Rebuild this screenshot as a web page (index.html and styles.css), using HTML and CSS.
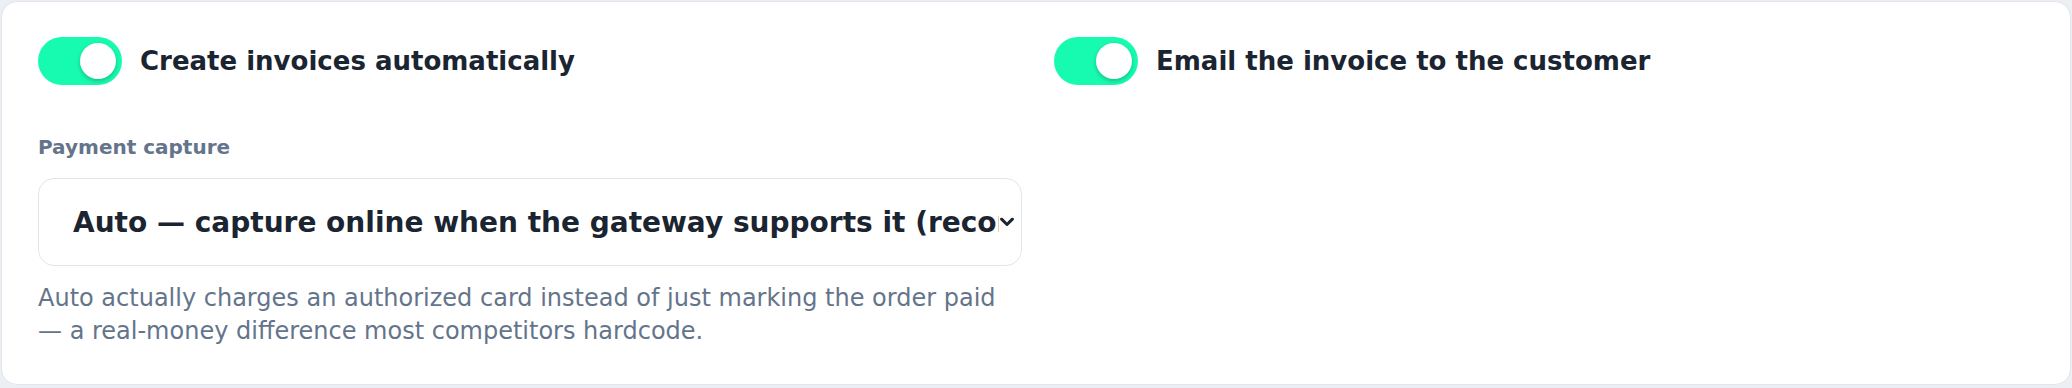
FILE: index.html
```html
<!DOCTYPE html>
<html lang="en">
<head>
<meta charset="utf-8">
<title>Invoice settings</title>
<link rel="stylesheet" href="styles.css">
</head>
<body>
<section class="card">
  <div class="grid">
    <div class="col">
      <label class="toggle-row">
        <span class="switch on"><span class="knob"></span></span>
        <span class="toggle-label">Create invoices automatically</span>
      </label>
      <div class="field">
        <div class="field-label">Payment capture</div>
        <div class="select-wrap">
          <select class="select">
            <option>Auto — capture online when the gateway supports it (recommended)</option>
            <option>Manual — mark the order paid only</option>
          </select>
          <svg class="chevron" viewBox="0 0 14 9" width="14" height="9" aria-hidden="true">
            <path d="M1.6 1.6 L7 7 L12.4 1.6" fill="none" stroke="#1b2431" stroke-width="3" stroke-linecap="round" stroke-linejoin="round"/>
          </svg>
        </div>
        <p class="help">Auto actually charges an authorized card instead of just marking the order paid — a real-money difference most competitors hardcode.</p>
      </div>
    </div>
    <div class="col">
      <label class="toggle-row">
        <span class="switch on"><span class="knob"></span></span>
        <span class="toggle-label">Email the invoice to the customer</span>
      </label>
    </div>
  </div>
</section>
</body>
</html>
```

FILE: styles.css
```css
html, body {
  margin: 0;
  padding: 0;
}
body {
  background: #eceff3;
  font-family: "DejaVu Sans", Verdana, sans-serif;
  color: #1b2431;
}
.card {
  margin: 1px;
  height: 384px;
  box-sizing: border-box;
  background: #ffffff;
  border: 1px solid #e1e5eb;
  border-radius: 16px;
  padding: 35px 32px 0 36px;
}
.grid {
  display: grid;
  grid-template-columns: 1fr 1fr;
  column-gap: 32px;
}
.col {
  display: flex;
  flex-direction: column;
  min-width: 0;
}
.toggle-row {
  display: flex;
  align-items: center;
  gap: 18px;
  height: 48px;
}
.switch {
  flex: none;
  width: 84px;
  height: 48px;
  border-radius: 24px;
  background: #17fbb1;
  box-sizing: border-box;
  padding: 6px;
  display: flex;
  justify-content: flex-end;
  align-items: center;
}
.knob {
  width: 36px;
  height: 36px;
  border-radius: 50%;
  background: #ffffff;
  box-shadow: 0 2px 4px rgba(15, 40, 30, 0.28);
}
.toggle-label {
  font-size: 26px;
  font-weight: 700;
  color: #1b2431;
  line-height: 32px;
}
.field {
  margin-top: 48px;
  display: flex;
  flex-direction: column;
}
.field-label {
  font-size: 20px;
  font-weight: 700;
  line-height: 28px;
  color: #64748b;
  margin-bottom: 17px;
}
.select-wrap {
  position: relative;
}
.select {
  display: block;
  -webkit-appearance: none;
  appearance: none;
  font-family: inherit;
  font-size: 28px;
  font-weight: 700;
  color: #1b2431;
  height: 88px;
  width: 100%;
  box-sizing: border-box;
  background: #ffffff;
  border: 1px solid #e2e6ec;
  border-radius: 16px;
  padding: 0 22px 0 34px;
  outline: none;
}
.chevron {
  position: absolute;
  right: 8px;
  top: 50%;
  transform: translateY(-50%);
  pointer-events: none;
}
.help {
  margin: 16px 0 0;
  font-size: 24px;
  line-height: 33px;
  color: #64748b;
}
```
